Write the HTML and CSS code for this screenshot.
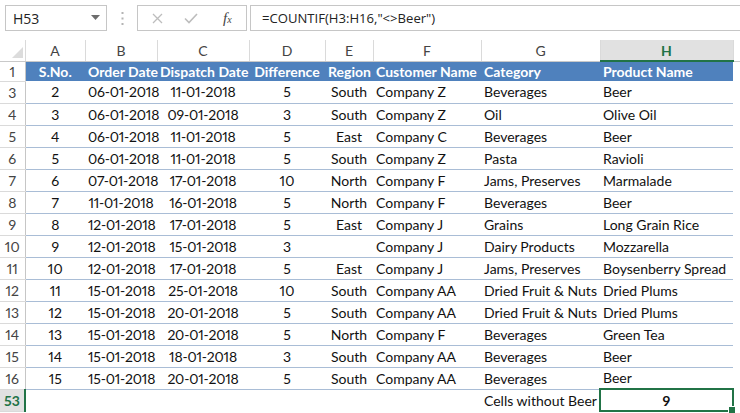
FILE: index.html
```html
<html lang="en">
<head>
    <meta charset="UTF-8">
    <meta name="viewport" content="width=device-width, initial-scale=1.0">
    <title>COUNTIF not equal</title>
    <link rel="stylesheet" href="styles.css">
</head>
<body>
    <div class="toolbar">
        <div class="namebox">
            <span>H53</span>
            <svg class="caret" width="9" height="5" viewBox="0 0 9 5"><path d="M0 0h9L4.5 5z" fill="#6d6d6d"/></svg>
        </div>
        <div class="grip">
            <svg width="3" height="13" viewBox="0 0 3 13"><rect x="0.5" y="0" width="2" height="2" fill="#b4b4b4"/><rect x="0.5" y="5.5" width="2" height="2" fill="#b4b4b4"/><rect x="0.5" y="11" width="2" height="2" fill="#b4b4b4"/></svg>
        </div>
        <div class="fxbuttons">
            <svg width="11" height="11" viewBox="0 0 11 11"><path d="M1 1l9 9M10 1l-9 9" stroke="#bdbdbd" stroke-width="1.3"/></svg>
            <svg width="14" height="11" viewBox="0 0 14 11"><path d="M1 5.5l4 4L13 1" stroke="#bdbdbd" stroke-width="1.6" fill="none"/></svg>
            <span class="fx">f<small>x</small></span>
        </div>
        <div class="formula">=COUNTIF(H3:H16,"&lt;&gt;Beer")</div>
    </div>

    <table class="sheet">
        <colgroup>
            <col style="width:25px"><col style="width:60px"><col style="width:72px"><col style="width:92px">
            <col style="width:76px"><col style="width:48px"><col style="width:108px"><col style="width:119px">
            <col style="width:133px"><col>
        </colgroup>
        <tr class="colheads">
            <th class="corner"><span class="tri"></span></th>
            <th>A</th><th>B</th><th>C</th><th>D</th><th>E</th><th>F</th><th>G</th>
            <th class="active">H</th><th class="blank"></th>
        </tr>
        <tr class="title">
            <th class="rowhead">1</th>
            <td class="c">S.No.</td><td class="c">Order Date</td><td class="c">Dispatch Date</td>
            <td class="c">Difference</td><td class="c">Region</td><td>Customer Name</td>
            <td>Category</td><td>Product Name</td><td class="blank"></td>
        </tr>
        <tr class="data"><th class="rowhead">3</th><td class="c">2</td><td class="c d">06-01-2018</td><td class="c d">11-01-2018</td><td class="c">5</td><td class="c">South</td><td>Company Z</td><td>Beverages</td><td>Beer</td><td class="blank"></td></tr>
        <tr class="data"><th class="rowhead">4</th><td class="c">3</td><td class="c d">06-01-2018</td><td class="c d">09-01-2018</td><td class="c">3</td><td class="c">South</td><td>Company Z</td><td>Oil</td><td>Olive Oil</td><td class="blank"></td></tr>
        <tr class="data"><th class="rowhead">5</th><td class="c">4</td><td class="c d">06-01-2018</td><td class="c d">11-01-2018</td><td class="c">5</td><td class="c">East</td><td>Company C</td><td>Beverages</td><td>Beer</td><td class="blank"></td></tr>
        <tr class="data"><th class="rowhead">6</th><td class="c">5</td><td class="c d">06-01-2018</td><td class="c d">11-01-2018</td><td class="c">5</td><td class="c">South</td><td>Company Z</td><td>Pasta</td><td>Ravioli</td><td class="blank"></td></tr>
        <tr class="data"><th class="rowhead">7</th><td class="c">6</td><td class="c d">07-01-2018</td><td class="c d">17-01-2018</td><td class="c">10</td><td class="c">North</td><td>Company F</td><td>Jams, Preserves</td><td>Marmalade</td><td class="blank"></td></tr>
        <tr class="data"><th class="rowhead">8</th><td class="c">7</td><td class="c d">11-01-2018</td><td class="c d">16-01-2018</td><td class="c">5</td><td class="c">North</td><td>Company F</td><td>Beverages</td><td>Beer</td><td class="blank"></td></tr>
        <tr class="data"><th class="rowhead">9</th><td class="c">8</td><td class="c d">12-01-2018</td><td class="c d">17-01-2018</td><td class="c">5</td><td class="c">East</td><td>Company J</td><td>Grains</td><td>Long Grain Rice</td><td class="blank"></td></tr>
        <tr class="data"><th class="rowhead">10</th><td class="c">9</td><td class="c d">12-01-2018</td><td class="c d">15-01-2018</td><td class="c">3</td><td class="c"></td><td>Company J</td><td>Dairy Products</td><td>Mozzarella</td><td class="blank"></td></tr>
        <tr class="data"><th class="rowhead">11</th><td class="c">10</td><td class="c d">12-01-2018</td><td class="c d">17-01-2018</td><td class="c">5</td><td class="c">East</td><td>Company J</td><td>Jams, Preserves</td><td>Boysenberry Spread</td><td class="blank"></td></tr>
        <tr class="data"><th class="rowhead">12</th><td class="c">11</td><td class="c d">15-01-2018</td><td class="c d">25-01-2018</td><td class="c">10</td><td class="c">South</td><td>Company AA</td><td>Dried Fruit &amp; Nuts</td><td>Dried Plums</td><td class="blank"></td></tr>
        <tr class="data"><th class="rowhead">13</th><td class="c">12</td><td class="c d">15-01-2018</td><td class="c d">20-01-2018</td><td class="c">5</td><td class="c">South</td><td>Company AA</td><td>Dried Fruit &amp; Nuts</td><td>Dried Plums</td><td class="blank"></td></tr>
        <tr class="data"><th class="rowhead">14</th><td class="c">13</td><td class="c d">15-01-2018</td><td class="c d">20-01-2018</td><td class="c">5</td><td class="c">North</td><td>Company F</td><td>Beverages</td><td>Green Tea</td><td class="blank"></td></tr>
        <tr class="data"><th class="rowhead">15</th><td class="c">14</td><td class="c d">15-01-2018</td><td class="c d">18-01-2018</td><td class="c">3</td><td class="c">South</td><td>Company AA</td><td>Beverages</td><td>Beer</td><td class="blank"></td></tr>
        <tr class="data"><th class="rowhead">16</th><td class="c">15</td><td class="c d">15-01-2018</td><td class="c d">20-01-2018</td><td class="c">5</td><td class="c">South</td><td>Company AA</td><td>Beverages</td><td>Beer</td><td class="blank"></td></tr>
        <tr class="result">
            <th class="rowhead active">53</th>
            <td></td><td></td><td></td><td></td><td></td><td></td>
            <td>Cells without Beer</td>
            <td class="selected">9<span class="handle"></span></td>
            <td class="blank"></td>
        </tr>
    </table>
</body>
</html>
```

FILE: styles.css
```css
body {
    margin: 0;
    background: #fff;
    overflow: hidden;
}

.toolbar {
    display: flex;
    align-items: stretch;
    height: 40px;
    padding-top: 5px;
    box-sizing: border-box;
    font-family: "Open Sans", sans-serif;
    font-size: 14px;
    color: #222;
}

.toolbar > div {
    height: 26px;
    box-sizing: border-box;
}

.namebox {
    margin-left: 5px;
    width: 102px;
    border: 1px solid #c6c6c6;
    display: flex;
    align-items: center;
    justify-content: space-between;
    padding: 0 6px 0 7px;
}

.caret {
    margin-top: -2px;
}

.grip {
    width: 30px;
    display: flex;
    align-items: center;
    justify-content: center;
}

.fxbuttons {
    width: 110px;
    border: 1px solid #c6c6c6;
    display: flex;
    align-items: center;
    padding: 0 0 0 14px;
}

.fxbuttons svg:first-child {
    margin-right: 21px;
}

.fxbuttons svg:nth-child(2) {
    margin-right: 25px;
}

.fx {
    font-family: "Liberation Serif", serif;
    font-style: italic;
    font-size: 15px;
    color: #444;
}

.fx small {
    font-size: 10px;
}

.formula {
    flex: 1;
    margin-left: 3px;
    border-top: 1px solid #c6c6c6;
    border-bottom: 1px solid #c6c6c6;
    border-left: 1px solid #c6c6c6;
    padding-left: 11px;
    line-height: 24px;
    font-size: 13.1px;
    color: #222;
}

.sheet {
    border-collapse: collapse;
    table-layout: fixed;
    width: 740px;
    font-family: Lato, sans-serif;
    font-size: 14px;
    color: #111;
    font-variant-numeric: proportional-nums;
}

.sheet th,
.sheet td {
    padding: 0 3px;
    white-space: nowrap;
    overflow: visible;
    text-align: left;
    font-weight: normal;
}

.sheet .c {
    text-align: center;
}

.sheet .d {
    letter-spacing: -0.2px;
}

.colheads th {
    height: 21px;
    padding: 0;
    text-align: center;
    color: #444;
    font-size: 14px;
    border-right: 1px solid #dadada;
    border-bottom: 1px solid #c9c9c9;
}

.colheads .corner {
    position: relative;
}

.tri {
    position: absolute;
    right: 2px;
    bottom: 3px;
    width: 0;
    height: 0;
    border-left: 11px solid transparent;
    border-bottom: 11px solid #dcdcdc;
}

.colheads th.active {
    background: #e1e1e1;
    color: #217346;
    font-weight: bold;
    border-bottom: 2px solid #217346;
}

.colheads th.blank {
    border-right: none;
}

.rowhead {
    color: #444;
    font-size: 14px;
    border-right: 1px solid #c6c6c6;
    border-bottom: 1px solid #dadada;
    padding: 0 !important;
    text-align: center !important;
}

.title {
    height: 20px;
}

.title td {
    background: #4f81bd;
    color: #fff;
    font-weight: bold;
}

.title td.blank {
    background: #fff;
}

.data {
    height: 22px;
}

.data td {
    border-bottom: 1px solid #a9bdd6;
}

.data td.blank {
    border-bottom: none;
}

.result {
    height: 22px;
}

.rowhead.active {
    background: #e1e1e1;
    color: #217346;
    font-weight: bold;
    border-right: 2px solid #217346;
}

.selected {
    position: relative;
    text-align: center !important;
    font-weight: bold !important;
    border: 2px solid #217346;
}

.handle {
    position: absolute;
    right: -4px;
    bottom: -4px;
    width: 6px;
    height: 6px;
    background: #217346;
    border: 1px solid #fff;
}
```
